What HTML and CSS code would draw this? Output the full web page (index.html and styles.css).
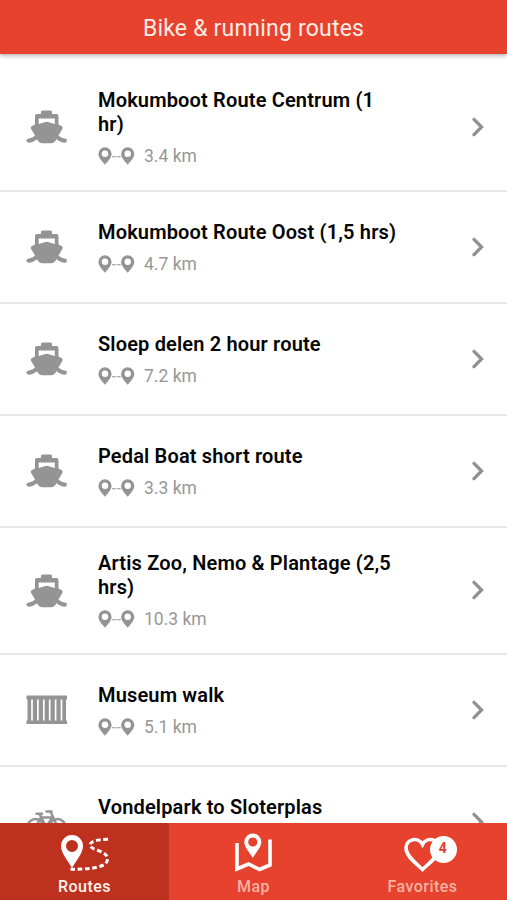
FILE: index.html
```html
<!DOCTYPE html>
<html lang="en">
<head>
<meta charset="utf-8">
<title>Bike &amp; running routes</title>
<link rel="stylesheet" href="styles.css">
</head>
<body>
<svg class="defs" aria-hidden="true">
  <symbol id="boat" viewBox="0 0 42 34">
    <path fill="currentColor" fill-rule="evenodd" d="M15 2Q15 .5 16.500 .5H24.500Q26 .5 26 2V4H30.500Q32.500 4 32.500 6V14.500L35.500 16Q37.500 17 36.300 19L32.500 25.500C34.500 27.500 37 28.300 39.500 28.800C41.500 29.500 41.500 32 39 32.800C35.500 32.500 32.500 31 30.500 29.200C29 32 27.500 33.200 25 33.200H16.500C14 33.200 12.500 32 11 29.200C9 31 6 32.500 2.500 32.800C0 32 0 29.500 2 28.800C4.500 28.300 7 27.500 9 25.500L5.200 19Q4 17 6 16L9 14.500V6Q9 4 11 4H15ZM12.700 8.500V14L19.500 12Q20.700 11.600 22 12L28.800 14V8.500Z"/>
  </symbol>
  <symbol id="museum" viewBox="0 0 42 30">
    <path fill="currentColor" d="M.5 1Q.5 .5 1 .5H40.500Q41 .5 41 1V4.500H40V25.500H41V29H.5V25.500H1.500V4.500H.5Z"/>
    <path stroke="#fff" stroke-width="1.700" d="M6 4.500V25.500M11.900 4.500V25.500M17.800 4.500V25.500M23.700 4.500V25.500M29.600 4.500V25.500M35.500 4.500V25.500"/>
  </symbol>
  <symbol id="bike" viewBox="0 0 42 28">
    <g fill="none" stroke="currentColor" stroke-width="2.500" stroke-linecap="round" stroke-linejoin="round">
      <circle cx="9.500" cy="17" r="8"/><circle cx="31.500" cy="17" r="8"/>
      <path d="M9.500 17L15 7.500H26.500L20 17H9.500M20 17L13.500 4M10.500 3.700H16M31.500 17L24.500 1.500H20.500M24.500 1.500H25.500"/>
    </g>
  </symbol>
  <symbol id="pins" viewBox="0 0 37 18">
    <path fill="currentColor" fill-rule="evenodd" d="M7 .3A6.600 6.600 0 0 1 13.600 6.900C13.600 10.500 9.500 14.500 7 17.700C4.500 14.500 .4 10.500 .4 6.900A6.600 6.600 0 0 1 7 .3ZM7 3.600A3.200 3.200 0 1 0 7 10A3.200 3.200 0 0 0 7 3.600ZM29.700 .3A6.600 6.600 0 0 1 36.300 6.900C36.300 10.500 32.200 14.500 29.700 17.700C27.200 14.500 23.100 10.500 23.100 6.900A6.600 6.600 0 0 1 29.700 .3ZM29.700 3.600A3.200 3.200 0 1 0 29.700 10A3.200 3.200 0 0 0 29.700 3.600Z"/>
    <path stroke="currentColor" stroke-width="1.100" d="M14 9.700H18M18.800 9.700H22.800"/>
  </symbol>
  <symbol id="chevron" viewBox="0 0 12 20">
    <path fill="none" stroke="currentColor" stroke-width="3.300" stroke-linecap="round" stroke-linejoin="miter" d="M2 2.300L9.600 10L2 17.700"/>
  </symbol>
</svg>
<div class="app">
  <header class="header">Bike &amp; running routes</header>
  <main class="list">
    <article class="row tall">
      <svg class="kind"><use href="#boat"/></svg>
      <div class="info"><h2>Mokumboot Route Centrum (1 hr)</h2><p><svg class="pins"><use href="#pins"/></svg>3.4 km</p></div>
      <svg class="chevron"><use href="#chevron"/></svg>
    </article>
    <article class="row">
      <svg class="kind"><use href="#boat"/></svg>
      <div class="info"><h2>Mokumboot Route Oost (1,5 hrs)</h2><p><svg class="pins"><use href="#pins"/></svg>4.7 km</p></div>
      <svg class="chevron"><use href="#chevron"/></svg>
    </article>
    <article class="row">
      <svg class="kind"><use href="#boat"/></svg>
      <div class="info"><h2>Sloep delen 2 hour route</h2><p><svg class="pins"><use href="#pins"/></svg>7.2 km</p></div>
      <svg class="chevron"><use href="#chevron"/></svg>
    </article>
    <article class="row">
      <svg class="kind"><use href="#boat"/></svg>
      <div class="info"><h2>Pedal Boat short route</h2><p><svg class="pins"><use href="#pins"/></svg>3.3 km</p></div>
      <svg class="chevron"><use href="#chevron"/></svg>
    </article>
    <article class="row tall">
      <svg class="kind"><use href="#boat"/></svg>
      <div class="info"><h2>Artis Zoo, Nemo &amp; Plantage (2,5 hrs)</h2><p><svg class="pins"><use href="#pins"/></svg>10.3 km</p></div>
      <svg class="chevron"><use href="#chevron"/></svg>
    </article>
    <article class="row">
      <svg class="kind museum"><use href="#museum"/></svg>
      <div class="info"><h2>Museum walk</h2><p><svg class="pins"><use href="#pins"/></svg>5.1 km</p></div>
      <svg class="chevron"><use href="#chevron"/></svg>
    </article>
    <article class="row">
      <svg class="kind bike"><use href="#bike"/></svg>
      <div class="info"><h2>Vondelpark to Sloterplas</h2></div>
      <svg class="chevron"><use href="#chevron"/></svg>
    </article>
  </main>
  <nav class="tabs">
    <a class="tab active">
      <svg class="tab-icon routes" viewBox="1 0 50 38">
        <path fill="#fff" fill-rule="evenodd" d="M13 0A11 11 0 0 1 24 11C24 18 17 26 13 33C9 26 2 18 2 11A11 11 0 0 1 13 0ZM13 5A6 6 0 1 0 13 17A6 6 0 0 0 13 5Z"/>
        <path fill="none" stroke="#fff" stroke-width="3" stroke-dasharray="4.600 2.700" d="M49 4.300C38 4.300 31 6.500 31 10C31 15.500 48.500 15 48.500 24C48.500 32 34 34.300 11.500 34.300"/>
      </svg>
      <span>Routes</span>
    </a>
    <a class="tab">
      <svg class="tab-icon map" viewBox="1 0 38 40">
        <path fill="none" stroke="#fff" stroke-width="3.600" d="M3 10V36L14.500 31L25.500 36.500L36 32V6.500"/>
        <path fill="#fff" fill-rule="evenodd" d="M18.800 .5A8.500 8.500 0 0 1 27.300 9C27.300 14.500 21.800 19.500 18.800 25C15.800 19.500 10.300 14.500 10.300 9A8.500 8.500 0 0 1 18.800 .5ZM18.800 4.400A4.600 4.600 0 1 0 18.800 13.600A4.600 4.600 0 0 0 18.800 4.400Z"/>
      </svg>
      <span>Map</span>
    </a>
    <a class="tab">
      <span class="heart-wrap">
        <svg class="tab-icon heart" viewBox="0 0 38 36">
          <path fill="none" stroke="#fff" stroke-width="3.600" d="M18.500 32.500C13 27 2 19.500 2 11C2 1.500 14.500-.5 18.500 7.500C22.500-.5 35 1.500 35 11C35 19.500 24 27 18.500 32.500Z"/>
        </svg>
        <b class="badge">4</b>
      </span>
      <span>Favorites</span>
    </a>
  </nav>
</div>
</body>
</html>
```

FILE: styles.css
```css
* { box-sizing: border-box; }
body { margin: 0; background: #fff; font-family: Roboto, "Liberation Sans", sans-serif; }
.defs { display: none; }
.app { display: flex; flex-direction: column; height: 900px; overflow: hidden; }
.header {
  flex: 0 0 54px;
  z-index: 1;
  padding-top: 4px;
  background: #e7422d;
  color: #fbece5;
  font-size: 23px;
  line-height: 50px;
  letter-spacing: .2px;
  text-align: center;
  box-shadow: 0 1px 5px rgba(0, 0, 0, .4);
}
.list { flex: 1; min-height: 0; padding-top: 10px; overflow: hidden; }
.row {
  display: grid;
  grid-template-columns: 42px 300px 12px;
  column-gap: 30px;
  align-items: center;
  height: 112px;
  padding: 0 22px 0 26px;
  border-bottom: 2px solid #e7e7e7;
}
.row.tall { height: 127px; }
.row:first-child { height: 128px; }
.kind { width: 42px; height: 34px; color: #949494; }
.kind.museum { height: 30px; }
.kind.bike { height: 28px; margin-top: 4px; }
.info { align-self: start; padding-top: 28px; }
.tall .info { padding-top: 23px; }
.row:first-child .info { padding-top: 24px; }
h2 { margin: 0; color: #050505; font-size: 20px; font-weight: 600; line-height: 24px; letter-spacing: .16px; }
p {
  display: flex;
  align-items: center;
  gap: 9px;
  margin: 8px 0 0;
  color: #979797;
  font-size: 17.500px;
  line-height: 24px;
}
.pins { width: 37px; height: 18px; color: #949494; }
.chevron { width: 12px; height: 20px; margin: -1px 0 0 44px; color: #919191; }
.tabs { flex: 0 0 77px; display: grid; grid-template-columns: repeat(3, 1fr); background: #e7422d; }
.tab {
  display: flex;
  flex-direction: column;
  align-items: center;
  justify-content: flex-end;
  gap: 4px;
  padding-bottom: 3px;
  color: #f6b2a4;
  font-size: 16px;
  font-weight: 500;
  line-height: 20px;
  letter-spacing: .45px;
}
.tab.active { background: #be311f; color: #fff1ec; }
.tab-icon { display: block; }
.routes { width: 50px; height: 38px; }
.map { width: 38px; height: 40px; }
.heart-wrap { position: relative; display: block; }
.heart { width: 38px; height: 36px; }
.badge {
  position: absolute;
  left: 26px;
  top: -1px;
  width: 27px;
  height: 27px;
  border-radius: 50%;
  background: #fff;
  color: #df3f2b;
  font-size: 14px;
  line-height: 25px;
  text-align: center;
}
```
